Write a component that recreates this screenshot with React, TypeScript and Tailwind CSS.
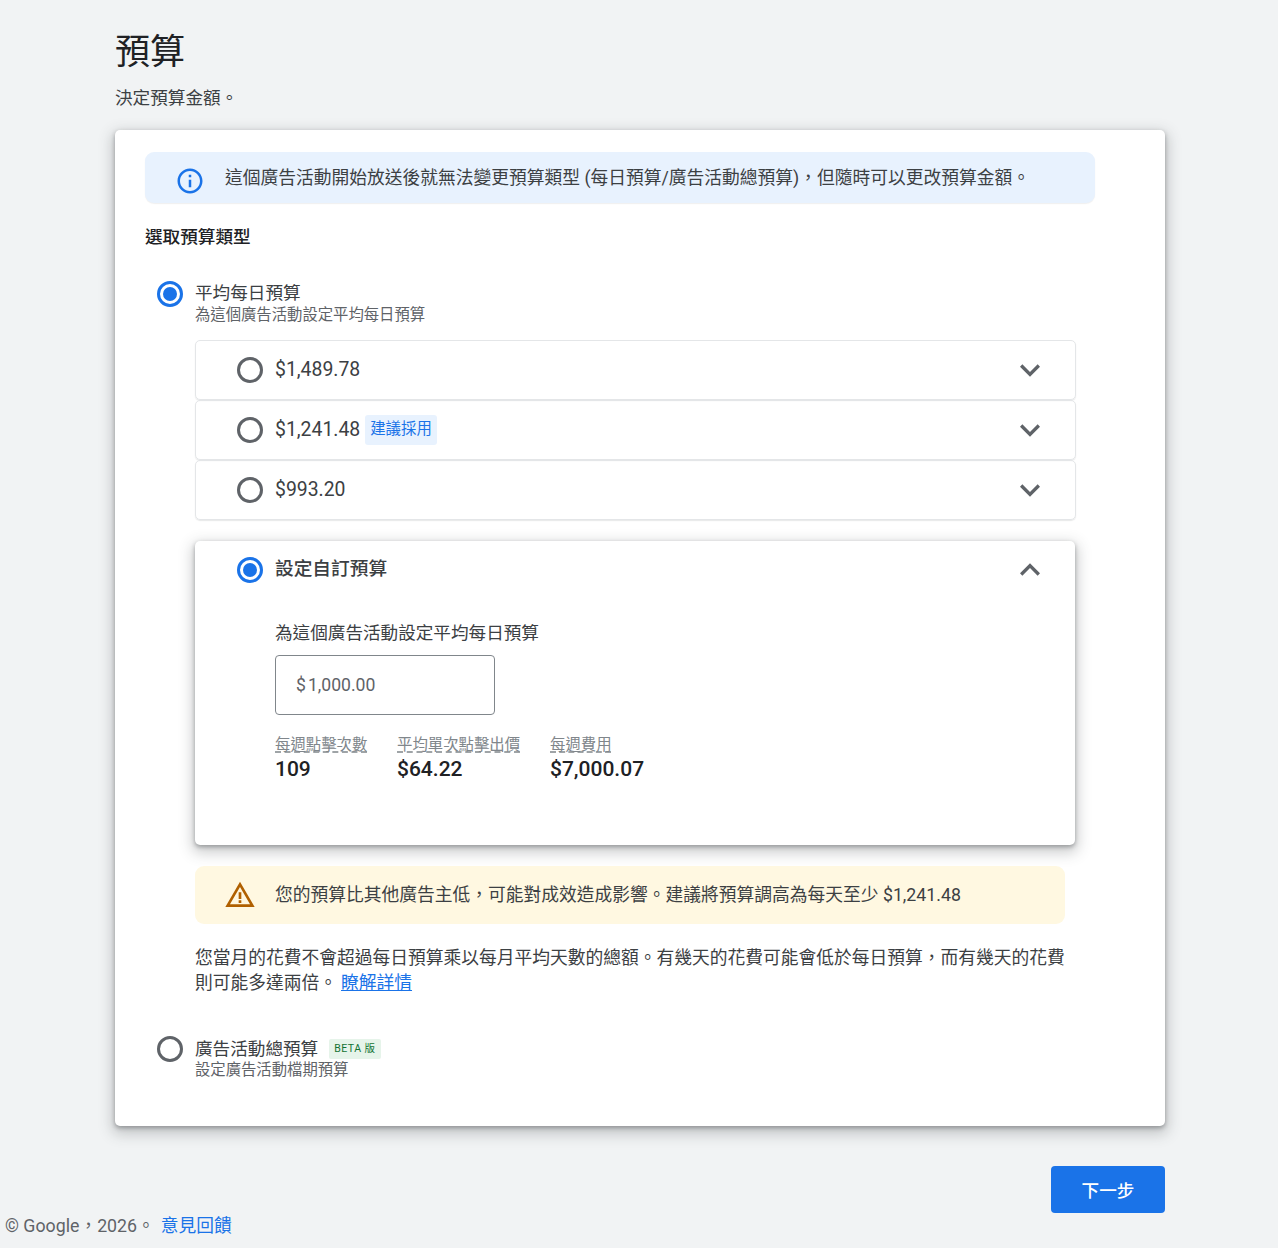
const font = "font-['Roboto','Noto_Sans_CJK_TC',sans-serif]"

function Radio({ checked = false }: { checked?: boolean }) {
  return (
    <span
      className={`flex w-[26px] h-[26px] shrink-0 items-center justify-center rounded-full border-[3px] ${
        checked ? "border-[#1a73e8]" : "border-[#5f6368]"
      }`}
    >
      {checked && <span className="block w-[14px] h-[14px] rounded-full bg-[#1a73e8]" />}
    </span>
  )
}

function InfoIcon() {
  return (
    <svg width="30" height="30" viewBox="0 0 24 24" fill="#1a73e8" className="mt-[6px] shrink-0">
      <path d="M11 7h2v2h-2zm0 4h2v6h-2zm1-9C6.48 2 2 6.48 2 12s4.48 10 10 10 10-4.48 10-10S17.52 2 12 2zm0 18c-4.41 0-8-3.59-8-8s3.59-8 8-8 8 3.59 8 8-3.59 8-8 8z" />
    </svg>
  )
}

function WarningIcon() {
  return (
    <svg width="32" height="32" viewBox="0 0 24 24" fill="#b06000" className="shrink-0">
      <path d="M12 5.99 19.53 19H4.47L12 5.99M12 2 1 21h22L12 2zm1 14h-2v2h2v-2zm0-6h-2v5h2v-5z" />
    </svg>
  )
}

function Chevron({ up = false }: { up?: boolean }) {
  return (
    <svg width="40" height="40" viewBox="0 0 24 24" fill="#5f6368" className="ml-auto -my-[7px] shrink-0">
      {up ? (
        <path d="M12 8l-6 6 1.41 1.41L12 10.83l4.59 4.58L18 14z" />
      ) : (
        <path d="M16.59 8.59 12 13.17 7.41 8.59 6 10l6 6 6-6z" />
      )}
    </svg>
  )
}

function AmountRow({ amount, tag }: { amount: string; tag?: string }) {
  return (
    <div className="-mx-[0.5px] flex h-[60px] items-center rounded-[5px] border border-[#e4e6e8] pl-[41.5px] pr-[24.5px] shadow-[0_1px_1px_rgba(60,64,67,0.12)]">
      <Radio />
      <span className="ml-[12px] -mt-[1px] text-[19.4px] leading-[26px] text-[#3c4043]">{amount}</span>
      {tag && (
        <span className="ml-[5px] flex h-[30px] items-center rounded-[3px] bg-[#e8f2fe] px-[5px] text-[15.4px] text-[#1a73e8]">
          {tag}
        </span>
      )}
      <Chevron />
    </div>
  )
}

function Stat({ label, value, width }: { label: string; value: string; width: string }) {
  return (
    <div className={width}>
      <div className="text-[15.4px] leading-[18px] text-[#80868b] underline decoration-dashed decoration-[#80868b] underline-offset-[2px]">
        {label}
      </div>
      <div className="mt-[2px] text-[21px] leading-[26px] font-medium text-[#202124]">{value}</div>
    </div>
  )
}

export default function App() {
  return (
    <div className={`${font} relative min-h-[1248px] bg-[#f1f3f4] text-[#202124]`}>
      <div className="relative left-[1px] mx-auto w-[1050px] pt-[31px]">
        <h1 className="text-[35px] leading-[44px] font-normal">預算</h1>
        <p className="mt-[10px] text-[17.6px] leading-[26px] text-[#3c4043]">決定預算金額。</p>

        <div className="mt-[19px] h-[996px] rounded-[5px] bg-white pl-[30px] pr-[70px] pt-[22px] shadow-[0_2px_4px_rgba(60,64,67,0.4),0_5px_14px_3px_rgba(60,64,67,0.25)]">
          <div className="flex h-[51px] items-center rounded-[9px] bg-[#e8f2fe] pl-[30px] shadow-[0_1px_1px_rgba(60,64,67,0.08)]">
            <InfoIcon />
            <span className="ml-[20px] mt-[1px] text-[17.75px] leading-[24px] text-[#3c4043]">
              這個廣告活動開始放送後就無法變更預算類型 (每日預算/廣告活動總預算)，但隨時可以更改預算金額。
            </span>
          </div>

          <h2 className="mt-[22px] text-[17.6px] leading-[24px] font-medium text-[#202124]">選取預算類型</h2>

          <div className="mt-[32px] flex items-start pl-[12px]">
            <Radio checked />
            <div className="ml-[12px]">
              <div className="text-[17.6px] leading-[25px] text-[#3c4043]">平均每日預算</div>
              <div className="text-[15.35px] leading-[19px] text-[#5f6368]">為這個廣告活動設定平均每日預算</div>
            </div>
          </div>

          <div className="ml-[50px] mr-[20px] mt-[15px]">
            <AmountRow amount="$1,489.78" />
            <AmountRow amount="$1,241.48" tag="建議採用" />
            <AmountRow amount="$993.20" />

            <div className="mt-[21px] h-[304px] rounded-[5px] pl-[42px] pr-[25px] pt-[16px] shadow-[0_2px_4px_rgba(60,64,67,0.4),0_5px_14px_3px_rgba(60,64,67,0.25)]">
              <div className="flex items-center">
                <Radio checked />
                <span className="ml-[12px] -mt-[2px] text-[18.7px] leading-[26px] font-medium text-[#3c4043]">設定自訂預算</span>
                <Chevron up />
              </div>
              <div className="ml-[38px] mt-[37px] text-[17.6px] leading-[26px] text-[#3c4043]">為這個廣告活動設定平均每日預算</div>
              <div className="ml-[38px] mt-[9px] flex h-[60px] w-[220px] items-center rounded-[4px] border border-[#80868b] pl-[20px] text-[17.6px] text-[#5f6368]">
                <span className="mr-[2px]">$</span>1,000.00
              </div>
              <div className="ml-[38px] mt-[21px] flex">
                <Stat label="每週點擊次數" value="109" width="w-[122px]" />
                <Stat label="平均單次點擊出價" value="$64.22" width="w-[153px]" />
                <Stat label="每週費用" value="$7,000.07" width="w-[120px]" />
              </div>
            </div>

            <div className="mt-[21px] flex h-[58px] w-[870px] items-center rounded-[9px] bg-[#fff8e1] pl-[29px]">
              <WarningIcon />
              <span className="ml-[19px] text-[17.75px] leading-[26px] text-[#3c4043]">
                您的預算比其他廣告主低，可能對成效造成影響。建議將預算調高為每天至少 $1,241.48
              </span>
            </div>

            <p className="mt-[22px] text-[17.75px] leading-[25px] text-[#3c4043]">
              您當月的花費不會超過每日預算乘以每月平均天數的總額。有幾天的花費可能會低於每日預算，而有幾天的花費則可能多達兩倍。
              <a className="ml-[4px] text-[#1a73e8] underline">瞭解詳情</a>
            </p>
          </div>

          <div className="mt-[40px] flex items-start pl-[12px]">
            <Radio />
            <div className="ml-[12px] mt-[1px]">
              <div className="flex items-center text-[17.6px] leading-[24px] text-[#3c4043]">
                廣告活動總預算
                <span className="ml-[11px] flex h-[20px] items-center rounded-[2px] bg-[#e6f4ea] px-[5px] text-[10.5px] tracking-[0.5px] text-[#137333]">
                  BETA 版
                </span>
              </div>
              <div className="text-[15.35px] leading-[19px] text-[#5f6368]">設定廣告活動檔期預算</div>
            </div>
          </div>
        </div>

        <div className="mt-[40px] flex justify-end">
          <button className="flex h-[47px] w-[114px] items-center justify-center rounded-[4px] bg-[#1a73e8] pt-[3px] text-[17.6px] font-medium text-white">
            下一步
          </button>
        </div>
      </div>

      <div className="absolute left-[5px] top-[1213px] text-[17.75px] leading-[26px] text-[#5f6368]">
        © Google，2026。
        <a className="ml-[6px] text-[#1a73e8]">意見回饋</a>
      </div>
    </div>
  )
}
